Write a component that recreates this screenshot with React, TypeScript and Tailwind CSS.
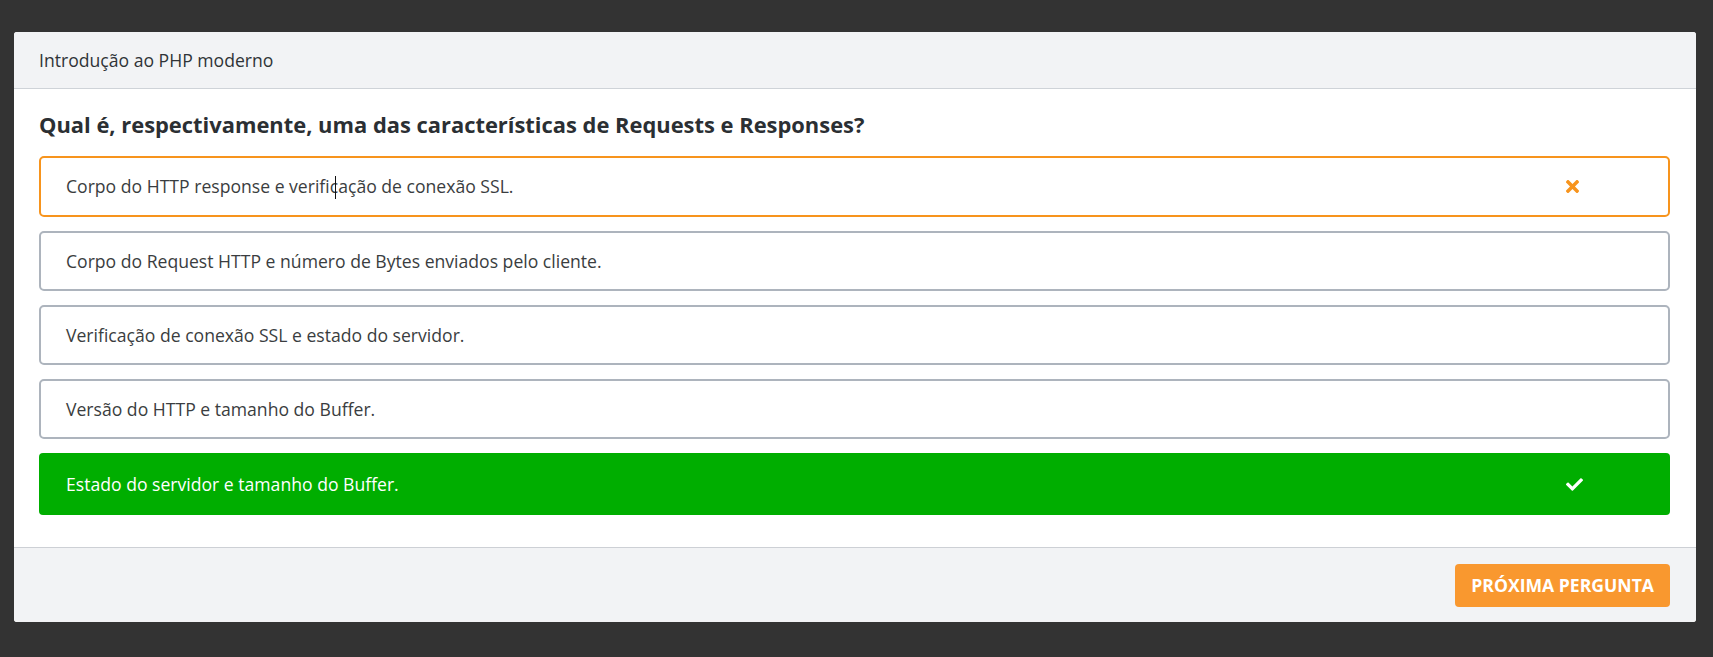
import React from "react";
import { FaTimes, FaCheck } from "react-icons/fa";

type Opt = { text: React.ReactNode; state: "wrong" | "right" | "none" };

const Caret = () => (
  <span className="relative inline-block w-0 h-0">
    <span className="absolute left-[5px] top-[-17px] w-px h-[23px] bg-[#111]" />
  </span>
);

const options: Opt[] = [
  {
    text: (
      <>
        Corpo do HTTP response e verifi
        <Caret />
        cação de conexão SSL.
      </>
    ),
    state: "wrong",
  },
  { text: "Corpo do Request HTTP e número de Bytes enviados pelo cliente.", state: "none" },
  { text: "Verificação de conexão SSL e estado do servidor.", state: "none" },
  { text: "Versão do HTTP e tamanho do Buffer.", state: "none" },
  { text: "Estado do servidor e tamanho do Buffer.", state: "right" },
];

export default function App() {
  return (
    <div
      className="min-h-[657px] bg-[#333333] pt-[32px] pl-[14px] pr-[17px] pb-[35px]"
      style={{ fontFamily: '"Open Sans", "Noto Sans", sans-serif' }}
    >
      <div className="bg-white rounded-[3px] overflow-hidden">
        <div className="h-[57px] bg-[#f2f3f5] border-b border-[#cfd3d8] flex items-center pl-[25px] text-[17.6px] text-[#2f3337]">
          Introdução ao PHP moderno
        </div>
        <div className="pl-[25px] pr-[26px] pt-[21px] pb-[32px]">
          <h2 className="text-[21.9px] leading-[30px] font-bold text-[#2b2f33] mb-[16px]">
            Qual é, respectivamente, uma das características de Requests e Responses?
          </h2>
          <div className="flex flex-col gap-[14px]">
            {options.map((o, i) => {
              if (o.state === "right") {
                return (
                  <div
                    key={i}
                    className="h-[62px] rounded-[4px] bg-[#00ae00] flex items-center justify-between pl-[27px] pr-[87px] text-[17.6px] text-white"
                  >
                    <span>{o.text}</span>
                    <FaCheck size={17} />
                  </div>
                );
              }
              if (o.state === "wrong") {
                return (
                  <div
                    key={i}
                    className="h-[61px] rounded-[5px] border-2 border-[#f7941d] bg-white flex items-center justify-between pl-[25px] pr-[86px] text-[17.6px] text-[#3a3d40]"
                  >
                    <span>{o.text}</span>
                    <FaTimes size={19} className="text-[#f7941d]" />
                  </div>
                );
              }
              return (
                <div
                  key={i}
                  className="h-[60px] rounded-[5px] border-2 border-[#adb4bd] bg-white flex items-center pl-[25px] text-[17.6px] text-[#3a3d40]"
                >
                  <span>{o.text}</span>
                </div>
              );
            })}
          </div>
        </div>
        <div className="h-[75px] bg-[#f2f3f5] border-t border-[#cdd0d5] flex items-center justify-end pr-[26px]">
          <button className="h-[43px] px-[16px] rounded-[4px] bg-[#f9982f] text-white font-bold text-[17.6px] uppercase">
            Próxima Pergunta
          </button>
        </div>
      </div>
    </div>
  );
}
